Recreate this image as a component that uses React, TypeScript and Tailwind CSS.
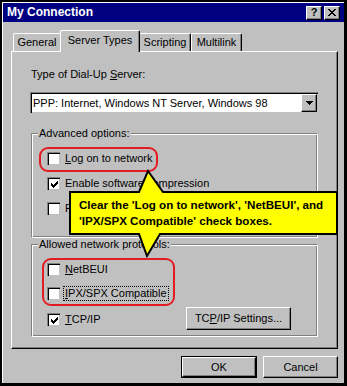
import React from "react";

const raised =
  "bg-[#c0c0c0] border-t border-l border-white border-r border-b border-r-black border-b-black shadow-[inset_-1px_-1px_0_#808080]";

function CheckBox({ checked }: { checked?: boolean }) {
  return (
    <div className="w-[13px] h-[13px] shrink-0 bg-white border-t border-l border-[#808080] border-r-white border-b-white shadow-[inset_1px_1px_0_#000,inset_-1px_-1px_0_#c0c0c0] flex items-center justify-center">
      {checked && (
        <svg width="7" height="7" viewBox="0 0 7 7">
          <path d="M0 2h1v1h1v1h1V3h1V2h1V1h1V0h1v3h-1v1h-1v1h-1v1h-1v1H2V6H1V5H0z" fill="#000" />
        </svg>
      )}
    </div>
  );
}

function Row({
  checked,
  children,
  focus,
}: {
  checked?: boolean;
  children: React.ReactNode;
  focus?: boolean;
}) {
  return (
    <div className="flex items-center h-[13px] ml-[15px] gap-[5px]">
      <CheckBox checked={checked} />
      <span
        className={
          focus
            ? "leading-[13px] px-[1px] -ml-[1px] outline outline-1 outline-dotted outline-black"
            : "leading-[13px]"
        }
      >
        {children}
      </span>
    </div>
  );
}

function Group({
  label,
  className,
  children,
}: {
  label: string;
  className: string;
  children: React.ReactNode;
}) {
  return (
    <div
      className={`w-[287px] flex flex-col border border-[#808080] border-r-white border-b-white shadow-[inset_1px_1px_0_#fff,inset_-1px_-1px_0_#808080] ${className}`}
    >
      <span className="self-start -mt-[7px] ml-[6px] px-[1px] leading-[13px] bg-[#c0c0c0]">
        {label}
      </span>
      {children}
    </div>
  );
}

export default function App() {
  return (
    <div className="relative w-[347px] h-[386px] bg-black pt-[2px] pl-[2px] pr-[3px] pb-[3px] font-['Liberation_Sans',Arial,sans-serif] text-[11px] text-black">
      <div className="h-full flex flex-col bg-[#c0c0c0] border-t border-l border-white">
        {/* title bar */}
        <div className="h-[19px] bg-[#000080] flex items-center pl-[4px] pr-[4px]">
          <span className="text-white font-bold text-[12px] leading-[15px]">My Connection</span>
          <div className="ml-auto flex gap-[2px]">
            <div className={`${raised} w-[16px] h-[14px] flex items-center justify-center font-bold text-[11px] leading-[11px]`}>
              ?
            </div>
            <div className={`${raised} w-[16px] h-[14px] flex items-center justify-center`}>
              <svg width="8" height="7" viewBox="0 0 8 7">
                <path d="M0 0h2v1h1v1h2V1h1V0h2v1H7v1H6v1H5v1h1v1h1v1h1v1H6V6H5V5H3v1H2v1H0V6h1V5h1V4h1V3H2V2H1V1H0z" fill="#000" />
              </svg>
            </div>
          </div>
        </div>

        <div className="mt-[8px] ml-[8px] flex flex-col w-[327px]">
          {/* tabs */}
          <div className="relative z-10 -mb-[1px] h-[22px] flex items-end pl-[2px]">
            <div className="w-[47px] h-[18px] mb-[1px] border-t border-l border-white rounded-tl-[2px] flex items-center justify-center leading-[13px]">
              General
            </div>
            <div className="w-[80px] h-[22px] bg-[#c0c0c0] border-t border-l border-white border-r border-r-black rounded-t-[2px] shadow-[inset_-1px_0_0_#808080] flex items-start justify-center pt-[3px] leading-[13px]">
              Server Types
            </div>
            <div className="w-[51px] h-[18px] mb-[1px] border-t border-r border-white border-r-black rounded-tr-[2px] shadow-[inset_-1px_0_0_#808080] flex items-center justify-center leading-[13px]">
              Scripting
            </div>
            <div className="w-[51px] h-[18px] mb-[1px] border-t border-l border-r border-white border-r-black rounded-t-[2px] shadow-[inset_-1px_0_0_#808080] flex items-center justify-center leading-[13px]">
              Multilink
            </div>
          </div>

          {/* panel */}
          <div className="h-[298px] border-t border-l border-white border-r border-b border-r-black border-b-black shadow-[inset_-1px_-1px_0_#808080] pl-[19px] flex flex-col">
            <div className="mt-[16px] leading-[13px]">
              Type of Dial-Up <span className="underline">S</span>erver:
            </div>
            <div className="mt-[11px] -ml-[1px] w-[288px] h-[21px] bg-white border-t border-l border-[#808080] border-r-white border-b-white shadow-[inset_1px_1px_0_#000,inset_-1px_-1px_0_#c0c0c0] p-[1px] pl-[2px] flex items-center">
              <span className="leading-[13px] pt-[1px]">PPP: Internet, Windows NT Server, Windows 98</span>
              <div className={`${raised} ml-auto w-[16px] h-full bg-[#c0c0c0] flex items-center justify-center`}>
                <svg width="7" height="4" viewBox="0 0 7 4">
                  <path d="M0 0h7v1H6v1H5v1H4v1H3V3H2V2H1V1H0z" fill="#000" />
                </svg>
              </div>
            </div>

            <Group label="Advanced options:" className="mt-[20px] h-[105px]">
              <div className="mt-[12px] flex flex-col gap-[12px]">
                <Row>
                  <span className="underline">L</span>og on to network
                </Row>
                <Row checked>
                  Enable software <span className="underline">c</span>ompression
                </Row>
                <Row>Require encrypted password</Row>
              </div>
            </Group>

            <Group label="Allowed network protocols:" className="mt-[6px] h-[93px]">
              <div className="mt-[12px] flex flex-col">
                <Row>
                  <span className="underline">N</span>etBEUI
                </Row>
                <div className="mt-[11px]">
                  <Row focus>
                    <span className="underline">I</span>PX/SPX Compatible
                  </Row>
                </div>
                <div className="mt-[7px] flex items-start">
                  <div className="mt-[6px]">
                    <Row checked>
                      <span className="underline">T</span>CP/IP
                    </Row>
                  </div>
                  <div className={`${raised} ml-auto mr-[26px] w-[105px] h-[23px] flex items-center justify-center leading-[13px]`}>
                    TC<span className="underline">P</span>/IP Settings...
                  </div>
                </div>
              </div>
            </Group>
          </div>

          {/* dialog buttons */}
          <div className="mt-[7px] flex justify-end gap-[6px]">
            <div className="w-[76px] h-[22px] border border-black">
              <div className={`${raised} w-full h-full flex items-center justify-center leading-[13px]`}>OK</div>
            </div>
            <div className={`${raised} w-[75px] h-[22px] flex items-center justify-center leading-[13px]`}>Cancel</div>
          </div>
        </div>
      </div>

      {/* red highlight outlines */}
      <div className="absolute left-[39px] top-[147px] w-[119px] h-[25px] border-2 border-[#e31b23] rounded-[9px]" />
      <div className="absolute left-[42px] top-[258px] w-[133px] h-[48px] border-2 border-[#e31b23] rounded-[9px]" />

      {/* callout */}
      <svg className="absolute left-0 top-0 pointer-events-none" width="347" height="386" viewBox="0 0 347 386">
        <path
          d="M70 192H139L148 171L163 192H337V234H160L147 256L139 234H70Z"
          fill="#ffff00"
          stroke="#000"
          strokeWidth="2"
          strokeLinejoin="miter"
        />
      </svg>
      <div className="absolute left-[79px] top-[197px] font-bold text-[11.6px] leading-[16px] whitespace-nowrap">
        <div>Clear the 'Log on to network', 'NetBEUI', and</div>
        <div>'IPX/SPX Compatible' check boxes.</div>
      </div>
    </div>
  );
}
